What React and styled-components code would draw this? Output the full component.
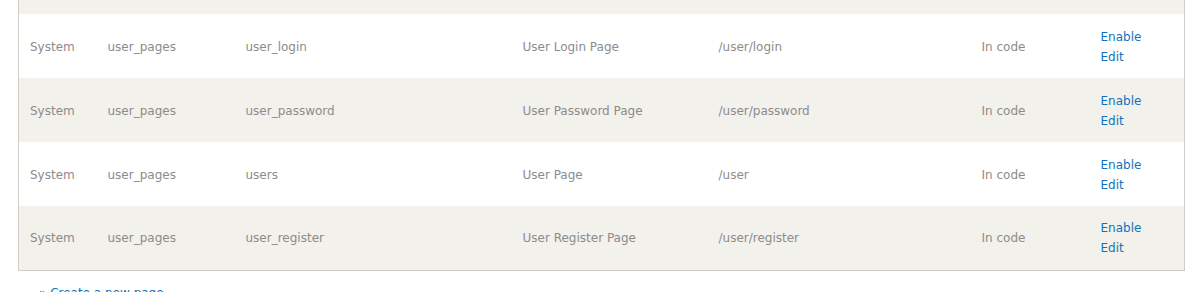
import React from 'react';
import styled, { createGlobalStyle } from 'styled-components';

const GlobalStyle = createGlobalStyle`
  html, body {
    margin: 0;
    padding: 0;
    background: #ffffff;
    overflow: hidden;
  }
  body {
    font-family: "DejaVu Sans", "Liberation Sans", sans-serif;
    font-size: 12px;
  }
`;

const pages = [
  { type: 'System', name: 'user_pages', task: 'user_login', title: 'User Login Page', path: '/user/login' },
  { type: 'System', name: 'user_pages', task: 'user_password', title: 'User Password Page', path: '/user/password' },
  { type: 'System', name: 'user_pages', task: 'users', title: 'User Page', path: '/user' },
  { type: 'System', name: 'user_pages', task: 'user_register', title: 'User Register Page', path: '/user/register' },
];

const widths = [78, 138, 277, 196, 263, 119, 95];

const App = () => {
  return (
    <Page>
      <GlobalStyle />
      <Table>
        <colgroup>
          {widths.map((w, i) => (
            <col key={i} style={{ width: w }} />
          ))}
        </colgroup>
        <tbody>
          {/* tail of the row above, scrolled out of view */}
          <StubRow>
            <td colSpan={7} />
          </StubRow>
          {pages.map((p, i) => (
            <Row key={p.task} striped={i % 2 === 1}>
              <Cell>{p.type}</Cell>
              <Cell>{p.name}</Cell>
              <Cell>{p.task}</Cell>
              <Cell>{p.title}</Cell>
              <Cell>{p.path}</Cell>
              <Cell>In code</Cell>
              <Cell>
                <Ops>
                  <OpLink href="#">Enable</OpLink>
                  <OpLink href="#">Edit</OpLink>
                </Ops>
              </Cell>
            </Row>
          ))}
        </tbody>
      </Table>
      <Footer>
        <OpLink href="#">» Create a new page</OpLink>
      </Footer>
    </Page>
  );
};

export default App;

const Page = styled.div`
  padding: 0 16px 0 18px;
`;

const Table = styled.table`
  width: 1166px;
  border-collapse: collapse;
  table-layout: fixed;
  border: 1px solid #cfcfc8;
  border-top: none;
`;

const StubRow = styled.tr`
  height: 14px;
  background: #f2f1eb;
`;

const Row = styled.tr`
  height: 64px;
  background: ${(p) => (p.striped ? '#f2f1eb' : '#ffffff')};
`;

const Cell = styled.td`
  padding: 1px 12px 0 11px;
  color: #8c8c8c;
  line-height: 20px;
  vertical-align: middle;
  white-space: nowrap;
`;

const Ops = styled.div`
  display: flex;
  flex-direction: column;
`;

const OpLink = styled.a`
  color: #0f74bc;
  text-decoration: none;
  line-height: 20px;
`;

const Footer = styled.div`
  padding: 12px 0 0 21px;
`;
